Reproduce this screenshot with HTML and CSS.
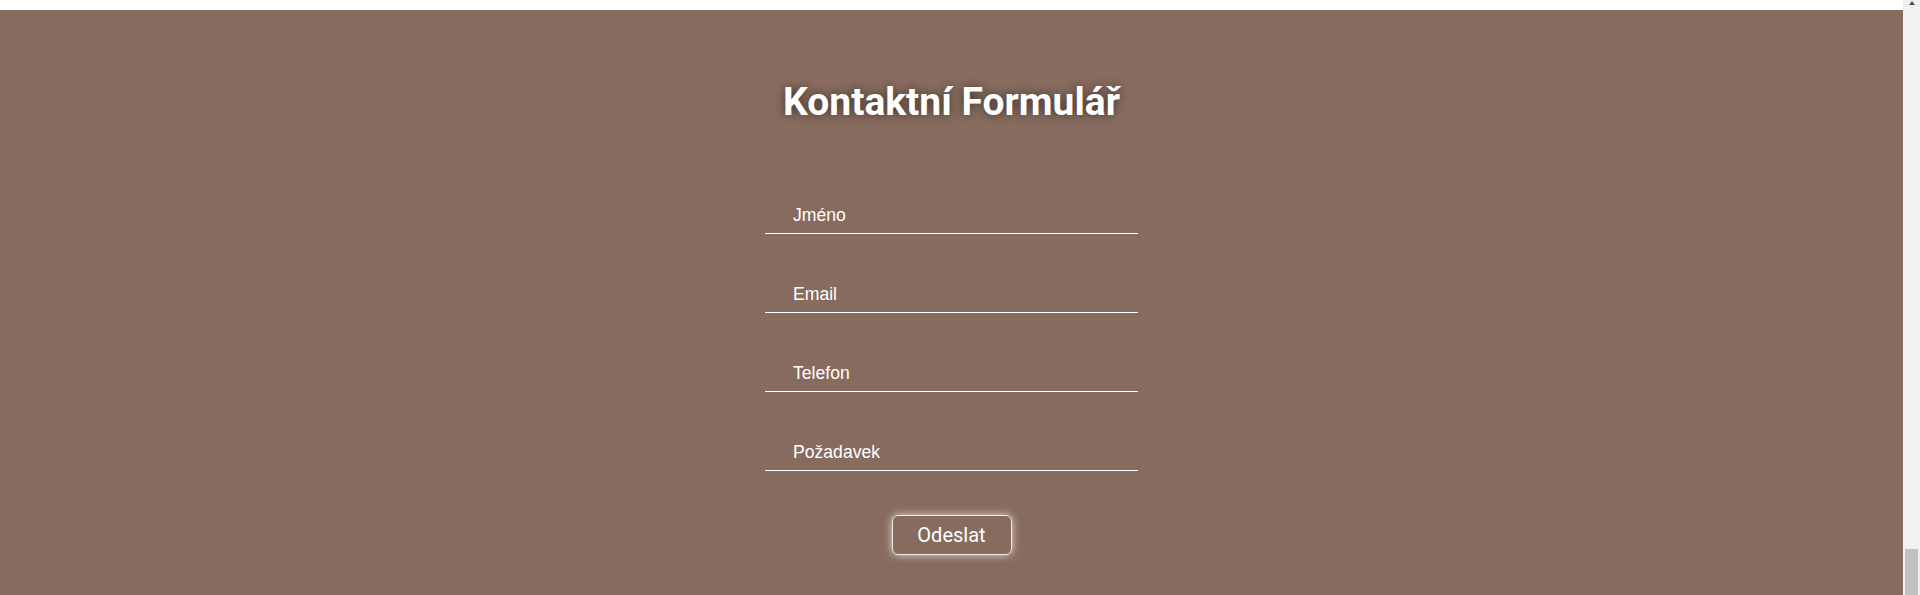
FILE: index.html
```html
<!DOCTYPE html>
<html lang="cs">
<head>
<meta charset="utf-8">
<title>Kontaktní Formulář</title>
<link rel="stylesheet" href="styles.css">
</head>
<body>
<div class="window">
  <div class="viewport">
    <div class="page-above"></div>
    <section class="contact">
      <h1 class="contact-title">Kontaktní Formulář</h1>
      <form class="contact-form">
        <input class="field" type="text" placeholder="Jméno">
        <input class="field" type="email" placeholder="Email">
        <input class="field" type="tel" placeholder="Telefon">
        <input class="field" type="text" placeholder="Požadavek">
        <button class="submit" type="button">Odeslat</button>
      </form>
    </section>
  </div>
  <div class="scrollbar">
    <div class="scroll-arrow"></div>
    <div class="scroll-track"></div>
    <div class="scroll-thumb"></div>
  </div>
</div>
</body>
</html>
```

FILE: styles.css
```css
html, body {
  margin: 0;
  padding: 0;
}
body {
  background: #ffffff;
  font-family: "Liberation Sans", Arial, sans-serif;
  overflow: hidden;
}
.window {
  display: flex;
  height: 595px;
}
.viewport {
  flex: 1;
  display: flex;
  flex-direction: column;
}
.page-above {
  height: 10px;
  background: #ffffff;
}
.contact {
  flex: 1;
  background: #876b5e;
  box-sizing: border-box;
  padding-top: 68px;
  display: flex;
  flex-direction: column;
  align-items: center;
}
.contact-title {
  margin: 0;
  font-family: Roboto, "Liberation Sans", sans-serif;
  font-weight: 700;
  font-size: 39px;
  line-height: 48px;
  color: #ffffff;
  text-shadow: 0 0 10px rgba(0, 0, 0, 0.55);
}
.contact-form {
  margin-top: 64px;
  width: 373px;
  display: flex;
  flex-direction: column;
  align-items: center;
  gap: 35px;
}
.field {
  width: 100%;
  height: 44px;
  box-sizing: border-box;
  padding: 7px 0 0 28px;
  margin: 0;
  border: none;
  border-bottom: 1px solid #ffffff;
  background: transparent;
  color: #ffffff;
  font-family: "Liberation Sans", Arial, sans-serif;
  font-size: 17.6px;
  outline: none;
}
.field::placeholder {
  color: #ffffff;
  opacity: 1;
}
.submit {
  margin-top: 9px;
  width: 120px;
  height: 40px;
  box-sizing: border-box;
  border: 1.5px solid #f4ece8;
  border-radius: 6px;
  background: transparent;
  color: #ffffff;
  font-family: Roboto, "Liberation Sans", sans-serif;
  font-size: 20px;
  box-shadow: 0 0 8px rgba(255, 255, 255, 0.75);
  cursor: pointer;
}
.scrollbar {
  width: 17px;
  background: #f1f1f1;
  display: flex;
  flex-direction: column;
  align-items: center;
}
.scroll-arrow {
  margin-top: 1px;
  width: 0;
  height: 0;
  border-left: 3.5px solid transparent;
  border-right: 3.5px solid transparent;
  border-bottom: 4px solid #505050;
}
.scroll-track {
  flex: 1;
}
.scroll-thumb {
  width: 13px;
  height: 46px;
  background: #c1c1c1;
}
```
